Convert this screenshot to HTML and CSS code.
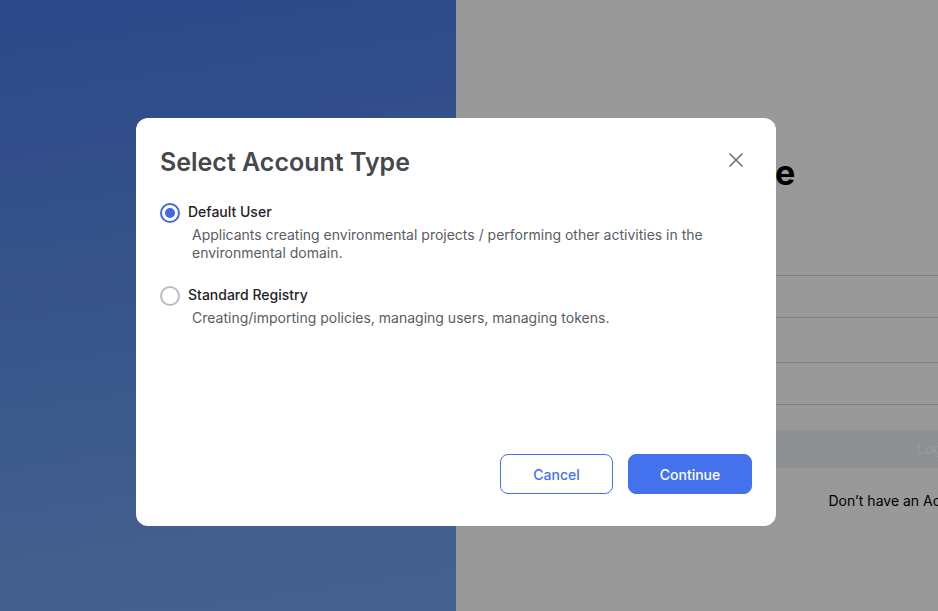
FILE: index.html
```html
<!DOCTYPE html>
<html lang="en">
<head>
<meta charset="utf-8">
<title>Select Account Type</title>
<link rel="stylesheet" href="styles.css">
</head>
<body>
<div class="page">
  <div class="hero"></div>
  <div class="auth">
    <div class="form">
      <h1 class="form-title">Welcome</h1>
      <div class="field"></div>
      <div class="field field-second"></div>
      <div class="login-btn">Login</div>
      <p class="signup">Don’t have an Account? Sign Up</p>
    </div>
  </div>
</div>

<div class="overlay">
  <div class="modal">
    <div class="modal-header">
      <h2 class="modal-title">Select Account Type</h2>
      <button class="close-btn" aria-label="Close">
        <svg width="14" height="14" viewBox="0 0 14 14"><path d="M1 1L13 13M13 1L1 13" stroke="#6b7079" stroke-width="1.6" stroke-linecap="round"/></svg>
      </button>
    </div>
    <div class="options">
      <label class="option">
        <span class="radio radio-checked"><span class="radio-dot"></span></span>
        <span class="option-text">
          <span class="option-label">Default User</span>
          <span class="option-desc">Applicants creating environmental projects / performing other activities in the environmental domain.</span>
        </span>
      </label>
      <label class="option">
        <span class="radio"></span>
        <span class="option-text">
          <span class="option-label">Standard Registry</span>
          <span class="option-desc">Creating/importing policies, managing users, managing tokens.</span>
        </span>
      </label>
    </div>
    <div class="modal-footer">
      <button class="btn btn-outline">Cancel</button>
      <button class="btn btn-primary">Continue</button>
    </div>
  </div>
</div>
</body>
</html>
```

FILE: styles.css
```css
* { box-sizing: border-box; }
html, body { margin: 0; padding: 0; }
body {
  font-family: Inter, "Noto Sans", sans-serif;
  width: 938px;
  height: 611px;
  overflow: hidden;
}
.page {
  display: flex;
  height: 611px;
}
.hero {
  width: 456px;
  flex-shrink: 0;
  background: linear-gradient(172deg, #4b78e4 0%, #5f8fe8 50%, #75a5ee 100%);
}
.auth {
  flex: 1;
  background: #ffffff;
  overflow: hidden;
}
.form {
  margin-left: 144px;
  width: 670px;
  padding-top: 152px;
}
.form-title {
  margin: 0 0 0 40px;
  font-family: Inter, sans-serif;
  font-weight: 700;
  font-size: 34px;
  line-height: 41px;
  color: #000;
}
.field {
  margin-top: 82px;
  height: 43px;
  border: 1px solid #d5d5dc;
  border-radius: 6px;
}
.field-second { margin-top: 44px; }
.login-btn {
  margin-top: 25px;
  height: 38px;
  background: #ebf0f5;
  border-radius: 6px;
  color: #ffffff;
  font-size: 14px;
  line-height: 38px;
  text-align: center;
}
.signup {
  margin: 23px 0 0;
  font-size: 14px;
  line-height: 20px;
  color: #000;
  text-align: center;
}

.overlay {
  position: fixed;
  inset: 0;
  background: rgba(0, 0, 0, 0.4);
  padding: 118px 0 0 136px;
}
.modal {
  width: 640px;
  height: 408px;
  background: #fff;
  border-radius: 12px;
  padding: 24px 24px 32px;
  display: flex;
  flex-direction: column;
}
.modal-header {
  display: flex;
  align-items: center;
  justify-content: space-between;
  height: 40px;
}
.modal-title {
  margin: 0;
  font-family: Inter, sans-serif;
  font-weight: 600;
  font-size: 25px;
  line-height: 40px;
  color: #45484d;
}
.close-btn {
  width: 32px;
  height: 32px;
  border: 0;
  background: transparent;
  padding: 0;
  display: flex;
  align-items: center;
  justify-content: center;
  margin-top: -4px;
}
.options {
  margin-top: 20px;
  display: flex;
  flex-direction: column;
  gap: 23px;
}
.option {
  display: flex;
  gap: 8px;
  align-items: flex-start;
}
.radio {
  width: 20px;
  height: 20px;
  margin-top: 1px;
  border-radius: 50%;
  border: 2px solid #b9bcc1;
  flex-shrink: 0;
  display: flex;
  align-items: center;
  justify-content: center;
}
.radio-checked { border-color: #4169e1; }
.radio-dot {
  width: 10px;
  height: 10px;
  border-radius: 50%;
  background: #4169e1;
}
.option-text {
  display: flex;
  flex-direction: column;
}
.option-label {
  font-size: 14px;
  line-height: 20px;
  font-weight: 500;
  color: #1f2328;
}
.option-desc {
  margin: 4px 0 0 4px;
  font-size: 14px;
  line-height: 18px;
  color: #585d65;
}
.modal-footer {
  margin-top: auto;
  display: flex;
  justify-content: flex-end;
  gap: 15px;
}
.btn {
  height: 40px;
  border-radius: 8px;
  font-family: Inter, sans-serif;
  font-size: 14px;
  font-weight: 500;
  cursor: pointer;
}
.btn-outline {
  width: 113px;
  background: #fff;
  border: 1px solid #4472ec;
  color: #4472ec;
}
.btn-primary {
  width: 124px;
  background: #4472ec;
  border: 1px solid #4472ec;
  color: #fff;
}
```
